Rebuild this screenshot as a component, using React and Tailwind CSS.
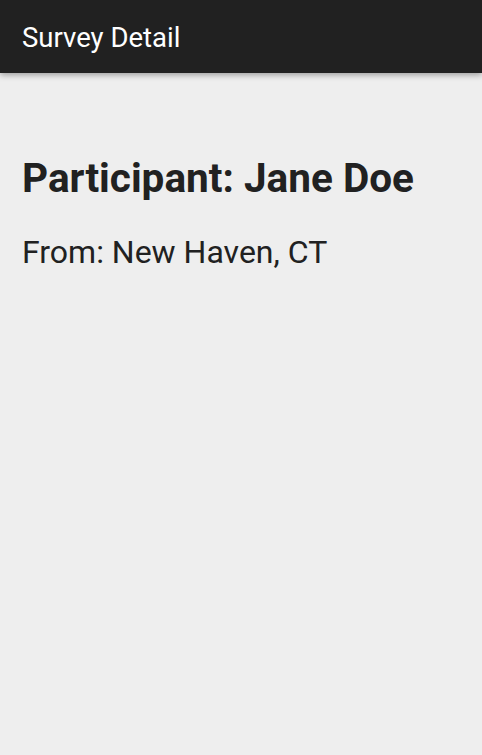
export default function App() {
  return (
    <div className="min-h-[755px] bg-[#eeeeee] font-['Roboto',sans-serif]">
      <header className="h-[73px] bg-[#212121] flex items-center px-[22px] pt-[2px] shadow-[0_2px_6px_rgba(0,0,0,0.35)] relative">
        <h1 className="text-white text-[27.5px] leading-none">Survey Detail</h1>
      </header>
      <main className="px-[22px] pt-[85px]">
        <h2 className="text-[#212121] text-[40.5px] font-bold leading-none">Participant: Jane Doe</h2>
        <p className="text-[#212121] text-[32px] leading-none mt-[37px]">From: New Haven, CT</p>
      </main>
    </div>
  );
}
